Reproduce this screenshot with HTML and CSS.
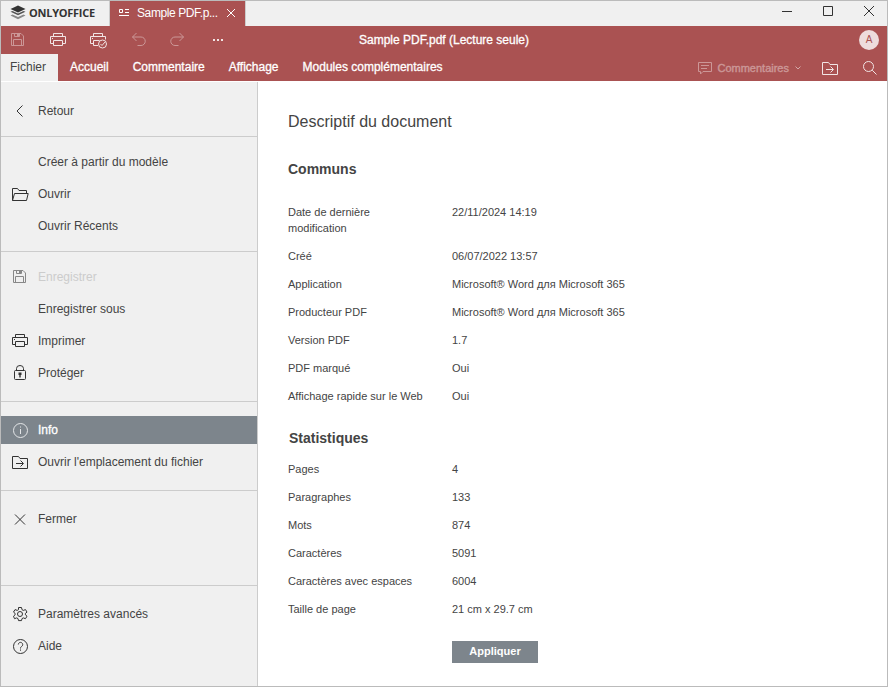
FILE: index.html
```html
<!DOCTYPE html>
<html lang="fr">
<head>
<meta charset="utf-8">
<title>Sample PDF.pdf</title>
<link rel="stylesheet" href="styles.css">
</head>
<body>
<svg class="defs" width="0" height="0">
  <symbol id="save" viewBox="0 0 20 20"><path d="M3.5 3.5h9.500l2.500 2.500v9.500h-12zM5.500 15.500v-6h8v6M6.500 3.500v3h5v-3"/><path d="M9 4h2v2h-2z" fill="currentColor" stroke="none"/></symbol>
  <symbol id="print" viewBox="0 0 20 20"><path d="M5.500 6.500v-3h9v3M5.500 13.500h-3v-7h15v7h-3M5.500 10.500h9v5h-9z"/><path d="M4 8h1v1h-1z" fill="currentColor" stroke="none"/></symbol>
  <symbol id="folder" viewBox="0 0 20 20"><path d="M2.500 16.500v-12h6l1.500 2h7.500v10z"/><path d="M6 11.500h7M10.500 8.500l3 3-3 3"/></symbol>
</svg>
<div class="window">
  <header class="titlebar">
    <div class="brand">
      <svg width="16" height="16" viewBox="0 0 16 16"><path d="M8 .5L15.500 4 8 7.500.5 4z" fill="#333"/><path d="M.5 6.800l2-.9L8 8.400l5.500-2.500 2 .9L8 10.300z" fill="#555"/><path d="M.5 10.500l2-.9L8 12.100l5.500-2.500 2 .9L8 14.300z" fill="#888"/></svg>
      <span class="brand-name">ONLYOFFICE</span>
    </div>
    <div class="doc-tab">
      <svg class="line" width="11" height="10" viewBox="0 0 11 10"><path d="M.5 1.500h3v3h-3zM6 1.500h4M6 4.500h4M0 7.500h10"/></svg>
      <span class="doc-name">Sample PDF.p...</span>
      <svg class="line" width="10" height="10" viewBox="0 0 10 10"><path d="M1 1l8 8M9 1l-8 8"/></svg>
    </div>
    <div class="window-buttons">
      <svg class="line" width="12" height="12" viewBox="0 0 12 12"><path d="M1 6.500h10"/></svg>
      <svg class="line" width="12" height="12" viewBox="0 0 12 12"><path d="M1.500 1.500h9v9h-9z"/></svg>
      <svg class="line" width="12" height="12" viewBox="0 0 12 12"><path d="M1 1l10 10M11 1L1 11"/></svg>
    </div>
  </header>
  <div class="toolbar">
    <div class="tools">
      <svg class="icon dim"><use href="#save"/></svg>
      <svg class="icon"><use href="#print"/></svg>
      <svg class="icon" viewBox="0 0 20 20"><path d="M5.500 6.500v-3h9v3M5.500 13.500h-3v-7h15v3M10 15.500H5.500v-5h6"/><path d="M4 8h1v1h-1z" fill="currentColor" stroke="none"/><circle cx="14.500" cy="14" r="4"/><path d="M12.500 14l1.500 1.500 3-3.500"/></svg>
      <svg class="icon dim" viewBox="0 0 20 20"><path d="M8.500 3L4.500 7l4 4M4.500 7H13a4 4 0 0 1 0 8.500h-3.500"/></svg>
      <svg class="icon dim" viewBox="0 0 20 20"><path d="M11.500 3l4 4-4 4M15.500 7H7a4 4 0 0 0 0 8.500h3.500"/></svg>
      <svg class="icon" viewBox="0 0 20 20"><path d="M5 9h2v2h-2zM9 9h2v2h-2zM13 9h2v2h-2z" fill="currentColor" stroke="none"/></svg>
    </div>
    <div class="doc-title">Sample PDF.pdf (Lecture seule)</div>
    <div class="account"><span class="avatar">A</span></div>
  </div>
  <nav class="ribbon">
    <span class="ribbon-tab active">Fichier</span>
    <span class="ribbon-tab">Accueil</span>
    <span class="ribbon-tab">Commentaire</span>
    <span class="ribbon-tab">Affichage</span>
    <span class="ribbon-tab">Modules complémentaires</span>
    <div class="ribbon-right">
      <svg class="icon dim" viewBox="0 0 20 20"><path d="M3.500 4.500h13v9H8l-2.500 2.500v-2.500h-2zM6 7.500h8M6 10.500h6"/></svg>
      <span class="comments">Commentaires</span>
      <svg class="chevron" width="8" height="6" viewBox="0 0 8 6"><path d="M1.500 1.500L4 4l2.500-2.500"/></svg>
      <svg class="icon open"><use href="#folder"/></svg>
      <svg class="icon" viewBox="0 0 20 20"><circle cx="8.500" cy="8.500" r="5"/><path d="M12.200 12.200l4.300 4.300"/></svg>
    </div>
  </nav>
  <div class="body">
    <aside class="menu">
      <div class="group back">
        <div class="item"><svg class="icon" viewBox="0 0 20 20"><path d="M12.500 4.500L7 10l5.500 5.500"/></svg>Retour</div>
      </div>
      <div class="group create">
        <div class="item"><span class="icon"></span>Créer à partir du modèle</div>
        <div class="item"><svg class="icon" viewBox="0 0 20 20"><path d="M2.500 16.500v-12h5l1.500 2h7.500v3M2.500 16.500l2-7h13.700l-1.700 7z"/></svg>Ouvrir</div>
        <div class="item"><span class="icon"></span>Ouvrir Récents</div>
      </div>
      <div class="group store">
        <div class="item disabled"><svg class="icon"><use href="#save"/></svg>Enregistrer</div>
        <div class="item"><span class="icon"></span>Enregistrer sous</div>
        <div class="item"><svg class="icon"><use href="#print"/></svg>Imprimer</div>
        <div class="item"><svg class="icon" viewBox="0 0 20 20"><rect x="4.500" y="7.500" width="11" height="9" rx="1"/><path d="M6.500 7.500V5.500a3.500 3 0 0 1 7 0v2"/><path d="M8.500 9.500h3v2.500h-.8v2.500H9.300V12h-.8z" fill="currentColor" stroke="none"/></svg>Protéger</div>
      </div>
      <div class="group details">
        <div class="item selected"><svg class="icon" viewBox="0 0 20 20"><circle cx="10.500" cy="10.500" r="7"/><path d="M10.500 9v5M10.500 6.500v1"/></svg>Info</div>
        <div class="item"><svg class="icon"><use href="#folder"/></svg>Ouvrir l'emplacement du fichier</div>
      </div>
      <div class="group close">
        <div class="item"><svg class="icon" viewBox="0 0 20 20"><path d="M5 5.500l10 10M15 5.500l-10 10"/></svg>Fermer</div>
      </div>
      <div class="group help">
        <div class="item"><svg class="icon" viewBox="0 0 20 20"><path d="M8.500 3.500h3l.5 2.200 1.300.7 2.200-.8 1.500 2.500-1.600 1.300v1.400l1.600 1.400-1.500 2.500-2.200-.8-1.300.7-.5 2h-3l-.5-2-1.300-.7-2.200.8L3.500 12.200l1.600-1.400V9.400L3.500 8.100 5 5.600l2.200.8L8.500 5.700z"/><circle cx="10" cy="10" r="2.500"/></svg>Paramètres avancés</div>
        <div class="item"><svg class="icon" viewBox="0 0 20 20"><circle cx="10.500" cy="10.500" r="7"/><path d="M8.300 8.500a2.200 2.200 0 1 1 3.300 2c-.8.500-1.100.8-1.100 2M10.500 13.500v1.200"/></svg>Aide</div>
      </div>
    </aside>
    <main class="content">
      <h1>Descriptif du document</h1>
      <h2>Communs</h2>
      <dl class="facts common">
        <dt>Date de dernière modification</dt><dd>22/11/2024 14:19</dd>
        <dt>Créé</dt><dd>06/07/2022 13:57</dd>
        <dt>Application</dt><dd>Microsoft® Word для Microsoft 365</dd>
        <dt>Producteur PDF</dt><dd>Microsoft® Word для Microsoft 365</dd>
        <dt>Version PDF</dt><dd>1.7</dd>
        <dt>PDF marqué</dt><dd>Oui</dd>
        <dt class="wide">Affichage rapide sur le Web</dt><dd>Oui</dd>
      </dl>
      <h2 class="stats-title">Statistiques</h2>
      <dl class="facts">
        <dt>Pages</dt><dd>4</dd>
        <dt>Paragraphes</dt><dd>133</dd>
        <dt>Mots</dt><dd>874</dd>
        <dt>Caractères</dt><dd>5091</dd>
        <dt class="wide">Caractères avec espaces</dt><dd>6004</dd>
        <dt>Taille de page</dt><dd>21 cm x 29.7 cm</dd>
      </dl>
      <button class="apply">Appliquer</button>
    </main>
  </div>
</div>
</body>
</html>
```
FILE: styles.css
```css
* { box-sizing: border-box; }
body { margin: 0; font: 12px/16px "Liberation Sans", Arial, sans-serif; color: #444; }
.defs { position: absolute; }
.window { width: 888px; height: 687px; border: 1px solid #bbb; background: #fff; display: flex; flex-direction: column; overflow: hidden; }
.icon { width: 20px; height: 20px; flex: none; }
svg { flex: none; }
.icon, .line, .chevron { fill: none; stroke: currentColor; }

.titlebar { height: 25px; flex: none; display: flex; background: #f0f0f0; color: #333; }
.brand { width: 109px; padding-left: 9px; display: flex; align-items: center; gap: 3px; border-right: 1px solid #ccc; padding-bottom: 2px; }
.brand-name { font: bold 11px/16px "Open Sans", sans-serif; letter-spacing: -.25px; }
.doc-tab { width: 135px; padding: 0 9px 2px; display: flex; align-items: center; background: #aa5252; color: #fff; }
.doc-tab + * { border-left: 1px solid #ccc; }
.doc-name { margin-left: 7px; flex: 1; font-size: 12px; white-space: nowrap; letter-spacing: -.4px; }
.window-buttons { flex: 1; display: flex; justify-content: flex-end; gap: 29px; padding: 4px 12px 0 0; }

.toolbar { height: 28px; flex: none; background: #aa5252; color: #fff; display: grid; grid-template-columns: 1fr auto 1fr; align-items: center; }
.tools { display: flex; gap: 20px; padding-left: 7px; }
.toolbar .icon, .ribbon .icon { opacity: .85; }
.toolbar .icon.dim, .ribbon .icon.dim { opacity: .4; }
.doc-title, .ribbon-tab, .comments, .selected { -webkit-text-stroke: .3px currentColor; }
.account { display: flex; justify-content: flex-end; padding-right: 8px; }
.avatar { width: 20px; height: 20px; border-radius: 50%; background: #eedcdc; color: #aa5252; font-size: 10px; line-height: 20px; text-align: center; }

.ribbon { height: 27px; flex: none; display: flex; align-items: center; background: #aa5252; color: #fff; }
.ribbon-tab { padding: 0 12px; line-height: 26px; height: 27px; }
.ribbon-tab.active { width: 57px; padding: 0 0 0 9px; background: #f0f0f0; color: #444; -webkit-text-stroke: 0; }
.ribbon-right { margin-left: auto; display: flex; align-items: center; padding-right: 7px; }
.comments { font-size: 11px; margin-left: 2px; opacity: .4; }
.chevron { margin-left: 5px; opacity: .5; }
.open { margin: 0 20px 0 18px; }

.body { flex: 1; display: flex; padding-top: 1px; }
.menu { width: 257px; flex: none; background: #f0f0f0; border-right: 1px solid #ccc; }
.group { display: flex; flex-direction: column; gap: 4px; border-bottom: 1px solid #ccc; }
.item { height: 28px; padding-left: 9px; display: flex; align-items: center; gap: 8px; white-space: nowrap; }
.item .icon { color: #333; }
.back { height: 55px; padding-top: 15px; }
.create { height: 115px; padding-top: 11px; }
.store { height: 150px; padding-top: 11px; }
.details { height: 89px; padding-top: 14px; }
.close { height: 95px; padding-top: 14px; }
.help { padding-top: 14px; border: 0; }
.disabled { color: #ccc; }
.disabled .icon { color: #888; }
.selected { background: #7d858c; color: #fff; }
.selected .icon { color: #e4e6e8; }

.content { padding: 30px 30px 0; flex: 1; }
h1 { margin: 0; font-size: 16px; font-weight: normal; line-height: 20px; }
h2 { margin: 27px 0 0; font-size: 14px; line-height: 20px; }
.facts { margin: 25px 0 0; display: grid; grid-template-columns: 110px 1fr; column-gap: 54px; row-gap: 12px; font-size: 11px; }
.stats-title { margin-top: 24px; padding-left: 1px; }
.stats-title + .facts { margin-top: 13px; }
.wide { white-space: nowrap; }
dd { margin: 0; }
.apply { display: block; width: 86px; height: 22px; margin: 24px 0 0 164px; padding: 0 0 2px; border: 0; background: #7d858c; color: #fff; font: bold 11px/20px "Liberation Sans", Arial, sans-serif; }
```
